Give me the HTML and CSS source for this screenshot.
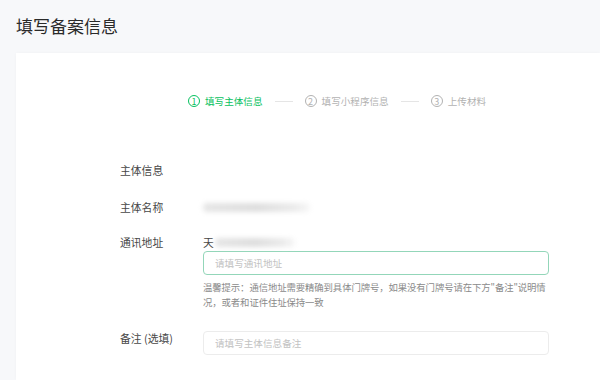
FILE: index.html
```html
<!DOCTYPE html>
<html lang="zh-CN">
<head>
    <meta charset="UTF-8">
    <meta name="viewport" content="width=device-width, initial-scale=1.0">
    <title>填写备案信息</title>
    <link rel="stylesheet" href="styles.css">
</head>
<body>
    <h1 class="page-title">填写备案信息</h1>

    <div class="card">
        <div class="steps">
            <div class="step current"><span class="step-num">1</span>填写主体信息</div>
            <span class="step-line"></span>
            <div class="step"><span class="step-num">2</span>填写小程序信息</div>
            <span class="step-line"></span>
            <div class="step"><span class="step-num">3</span>上传材料</div>
        </div>

        <div class="form">
            <div class="section-title">主体信息</div>

            <div class="form-row row-name">
                <label class="form-label">主体名称</label>
                <div class="form-value"><span class="blurred name-blur"></span></div>
            </div>

            <div class="form-row row-address">
                <label class="form-label">通讯地址</label>
                <div class="form-value">
                    <div class="current-value">天<span class="blurred addr-blur"></span></div>
                    <input class="text-input focused" type="text" placeholder="请填写通讯地址">
                    <p class="hint">温馨提示：通信地址需要精确到具体门牌号，如果没有门牌号请在下方"备注"说明情况，或者和证件住址保持一致</p>
                </div>
            </div>

            <div class="form-row row-remark">
                <label class="form-label">备注 (选填)</label>
                <div class="form-value">
                    <input class="text-input" type="text" placeholder="请填写主体信息备注">
                </div>
            </div>
        </div>
    </div>
</body>
</html>
```

FILE: styles.css
```css
:root {
    --page-bg: #f7f8fa;
    --green: #07c160;
    --text: #474747;
    --muted: #8a8a8a;
    --light: #b2b2b2;
    --placeholder: #c2c2c2;
}

* {
    margin: 0;
    padding: 0;
    box-sizing: border-box;
    font-family: "Noto Sans CJK SC", "Noto Sans", sans-serif;
}

body {
    background: var(--page-bg);
    color: var(--text);
    overflow: hidden;
    height: 380px;
}

.page-title {
    font-size: 17px;
    font-weight: 400;
    line-height: 20px;
    padding: 16px 16px 0;
    color: #2a2a2a;
}

.card {
    margin: 17px 0 0 16px;
    height: 327px;
    background: #fff;
    box-shadow: 0 0 3px rgba(0, 0, 0, 0.03);
}

.steps {
    display: flex;
    align-items: center;
    padding: 41px 0 0 172px;
    height: 55px;
    font-size: 9.6px;
    line-height: 14px;
    color: var(--light);
}

.step {
    display: flex;
    align-items: center;
}

.step-num {
    display: inline-flex;
    align-items: center;
    justify-content: center;
    width: 12px;
    height: 12px;
    border: 1px solid currentColor;
    border-radius: 50%;
    font-size: 9px;
    line-height: 1;
    margin-right: 5px;
}

.step.current {
    color: var(--green);
}

.step-line {
    width: 18px;
    height: 1px;
    background: #e5e5e5;
    margin: 0 12px;
}

.form {
    padding: 54px 0 0 104px;
    font-size: 10.8px;
    line-height: 16px;
}

.form-row {
    display: flex;
}

.row-name {
    margin-top: 21px;
}

.row-address {
    margin-top: 19px;
}

.row-remark {
    margin-top: 20px;
}

.form-label {
    width: 83px;
    flex-shrink: 0;
}

.form-value {
    width: 346px;
}

.current-value {
    display: flex;
    align-items: center;
}

.blurred {
    display: inline-block;
    height: 9px;
    border-radius: 4px;
    background: linear-gradient(90deg, #e6e6e6, #dedede 50%, #ebebeb 85%, #f7f7f7);
    filter: blur(2.5px);
}

.name-blur {
    width: 107px;
    margin-top: 4px;
}

.addr-blur {
    width: 80px;
    margin-left: 1px;
}

.text-input {
    display: block;
    width: 346px;
    height: 24px;
    border: 1px solid #ececec;
    border-radius: 4px;
    padding: 0 11px;
    font-size: 9.6px;
    color: var(--text);
    outline: none;
    background: #fff;
}

.text-input::placeholder {
    color: var(--placeholder);
}

.text-input.focused {
    margin-top: 1px;
    border-color: #93d6b9;
}

.row-remark .text-input {
    margin-top: 1px;
}

.hint {
    margin-top: 5px;
    font-size: 9.4px;
    letter-spacing: -0.1px;
    line-height: 15px;
    color: var(--muted);
}
```
